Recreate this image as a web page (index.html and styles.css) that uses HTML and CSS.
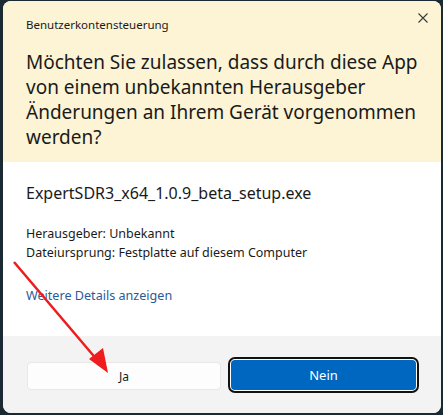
FILE: index.html
```html
<!DOCTYPE html>
<html lang="de">
<head>
<meta charset="utf-8">
<link rel="stylesheet" href="styles.css">
</head>
<body>
<div class="dialog">
  <div class="header">
    <div class="caption">Benutzerkontensteuerung</div>
    <svg class="close" width="10" height="10" viewBox="0 0 10 10"><path d="M0.5 0.5 L9.5 9.5 M9.5 0.5 L0.5 9.5" stroke="#3a3a3a" stroke-width="1.1" fill="none"/></svg>
    <h1 class="title">Möchten Sie zulassen, dass durch diese App von einem unbekannten Herausgeber Änderungen an Ihrem Gerät vorgenommen werden?</h1>
  </div>
  <div class="content">
    <div class="filename">ExpertSDR3_x64_1.0.9_beta_setup.exe</div>
    <div class="meta">
      <div>Herausgeber: Unbekannt</div>
      <div>Dateiursprung: Festplatte auf diesem Computer</div>
    </div>
    <a class="details">Weitere Details anzeigen</a>
  </div>
  <div class="footer">
    <button class="btn yes">Ja</button>
    <div class="focus"><button class="btn no">Nein</button></div>
  </div>
</div>
<svg class="arrow" width="443" height="415" viewBox="0 0 443 415">
  <line x1="14" y1="262" x2="98" y2="361" stroke="#ee1c1c" stroke-width="2.5"/>
  <polygon points="108,373 89,359 103,348" fill="#ee1c1c"/>
</svg>
</body>
</html>
```
FILE: styles.css
```css
html, body {
  margin: 0;
  padding: 0;
}
body {
  background: #1b2a32;
  width: 443px;
  height: 415px;
  padding: 1px 2px 2px 3px;
  box-sizing: border-box;
  font-family: "Noto Sans", "Open Sans", sans-serif;
  color: #1a1a1a;
  position: relative;
}
.dialog {
  width: 438px;
  height: 412px;
  border-radius: 8px;
  overflow: hidden;
  display: flex;
  flex-direction: column;
  background: #fff;
}
.header {
  background: #fcf4d4;
  height: 161px;
  box-sizing: border-box;
  padding: 16px 10px 0 23px;
  position: relative;
}
.caption {
  font-size: 11.5px;
  line-height: 16px;
  color: #1a1a1a;
}
.close {
  position: absolute;
  top: 12px;
  right: 13px;
}
.title {
  margin: 17px 0 0 0;
  font-weight: 400;
  font-size: 19px;
  line-height: 25px;
  color: #1a1a1a;
  width: 400px;
}
.content {
  flex: 1;
  padding: 20px 24px 0 23px;
}
.filename {
  font-size: 16px;
  line-height: 22px;
}
.meta {
  margin-top: 20px;
  font-size: 12.5px;
  line-height: 19px;
}
.details {
  display: block;
  margin-top: 25px;
  font-size: 12.6px;
  line-height: 18px;
  color: #2a5a9a;
}
.footer {
  background: #f3f3f3;
  height: 77px;
  box-sizing: border-box;
  padding: 21px 21px 0 24px;
  display: flex;
  align-items: flex-start;
  gap: 7px;
}
.btn {
  font-family: "Noto Sans", "Open Sans", sans-serif;
  font-size: 12px;
  height: 28px;
  border-radius: 4px;
  box-sizing: border-box;
  padding: 0;
}
.yes {
  width: 194px;
  margin-top: 5px;
  background: #fdfdfd;
  border: 1px solid #e8e8e8;
  color: #1a1a1a;
}
.focus {
  border: 2px solid #111;
  border-radius: 7px;
  padding: 1px;
  width: 191px;
  height: 36px;
  box-sizing: border-box;
  background: #fff;
}
.no {
  width: 100%;
  height: 100%;
  background: #0067c0;
  border: none;
  color: #fff;
  font-size: 13px;
}
.arrow {
  position: absolute;
  left: 0;
  top: 0;
  pointer-events: none;
}
```
